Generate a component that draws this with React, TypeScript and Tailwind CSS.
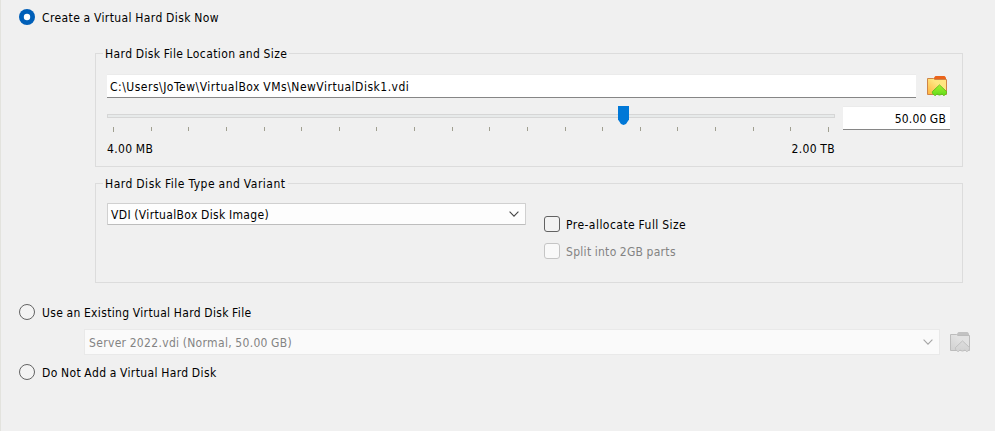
import { useId, type ReactNode } from 'react';

function Radio({ checked = false, label, tracking }: { checked?: boolean; label: string; tracking: string }) {
  return (
    <label className="flex h-4 items-center whitespace-nowrap">
      <svg width="16" height="16" viewBox="0 0 16 16" className="mr-[7px] shrink-0">
        {checked ? (
          <>
            <circle cx="8" cy="8" r="8" fill="#005fb8" />
            <circle cx="8" cy="8" r="3.2" fill="#fff" />
          </>
        ) : (
          <circle cx="8" cy="8" r="7.5" fill="#f3f3f3" stroke="#636363" />
        )}
      </svg>
      <span className={'pt-[2px] ' + tracking}>{label}</span>
    </label>
  );
}

function Check({ disabled = false, label, tracking }: { disabled?: boolean; label: string; tracking: string }) {
  return (
    <label className={'flex h-4 items-center whitespace-nowrap ' + (disabled ? 'text-[#838383]' : '')}>
      <span
        className={
          'mr-[6px] size-4 shrink-0 rounded-[3px] border ' +
          (disabled ? 'border-[#c5c5c5] bg-[#f9f9f9]' : 'border-[#626262] bg-[#f3f3f3]')
        }
      />
      <span className={'pt-[2px] ' + tracking}>{label}</span>
    </label>
  );
}

function Chevron({ color }: { color: string }) {
  return (
    <svg width="10" height="6" viewBox="0 0 10 6" fill="none" stroke={color} strokeWidth="1.1">
      <path d="M.6.7 5 5.1 9.4.7" />
    </svg>
  );
}

function FolderIcon({ disabled = false }: { disabled?: boolean }) {
  const id = useId();
  const c = disabled
    ? { tab: '#c2c2c2', top: '#e2e2e2', bottom: '#d0d0d0', edge: '#bcbcbc', arrow: '#dcdcdc', arrowLow: '#d2d2d2', line: '#bdbdbd' }
    : { tab: '#ea641b', top: '#ffe680', bottom: '#ffb13d', edge: '#cf8447', arrow: '#a4f02c', arrowLow: '#62dc1c', line: '#5cc01c' };
  return (
    <svg width="20" height="20" viewBox="0 0 20 20" className="shrink-0">
      <defs>
        <linearGradient id={id + 'f'} x1="1" y1="0" x2="0" y2="1">
          <stop stopColor={c.top} />
          <stop offset=".4" stopColor={c.top} />
          <stop offset="1" stopColor={c.bottom} />
        </linearGradient>
        <linearGradient id={id + 'a'} x1="0" y1="0" x2="0" y2="1">
          <stop stopColor={c.arrow} />
          <stop offset="1" stopColor={c.arrowLow} />
        </linearGradient>
      </defs>
      <path d="M7 3V1.6L8.5 0h9L19 1.4V4H7z" fill={c.tab} />
      <path d="M.5 2.5h6.2l1 1h11.8v15H.5z" fill={`url(#${id}f)`} stroke={c.edge} />
      <path
        d="M12.5 8.9 19.6 15.6v1.6l-2.3 2.3h-.8l-1.2-1.2h-1.3l-.8.7h-1.4l-.8-.7H9.7l-1.2 1.2h-.8l-2.3-2.3v-1.6z"
        fill={`url(#${id}a)`}
        stroke={c.line}
        strokeWidth=".9"
        strokeLinejoin="round"
      />
    </svg>
  );
}

function Group({ title, className, tracking, children }: { title: string; className: string; tracking: string; children: ReactNode }) {
  return (
    <fieldset className={'ml-[95px] w-[868px] border border-[#dcdcdc] ' + className}>
      <legend className="ml-[7px] h-[15px] pr-[2px] pl-[2px] leading-[17px] whitespace-nowrap">
        <span className={tracking}>{title}</span>
      </legend>
      {children}
    </fieldset>
  );
}

const ticks = Array.from({ length: 20 }, (_, i) => i);

export default function App() {
  return (
    <main className="flex h-[431px] w-[995px] flex-col overflow-hidden bg-[#f0f0f0] pt-[9px] font-['DejaVu_Sans_Condensed','DejaVu_Sans',sans-serif] text-[12px] leading-4 text-black [font-stretch:condensed] [word-spacing:-0.5px] shadow-[inset_1px_0_0_#e3e3de]">
      <div className="pl-[19px]">
        <Radio checked label="Create a Virtual Hard Disk Now" tracking="tracking-[0.4px]" />
      </div>

      <Group title="Hard Disk File Location and Size" className="mt-[21px] h-[121px]" tracking="tracking-[0.39px]">
        <div className="mt-[13px] ml-[11px] flex items-center">
          <div className="flex h-6 w-[809px] items-center border-t border-b border-t-[#ebebeb] border-b-[#868686] bg-white pl-[3px] whitespace-nowrap">
            <span className="pt-[2px] tracking-[0.5px]">C:\Users\JoTew\VirtualBox VMs\NewVirtualDisk1.vdi</span>
          </div>
          <div className="ml-[11px]">
            <FolderIcon />
          </div>
        </div>
        <div className="mt-2 ml-[11px] flex">
          <div className="w-[728px]">
            <div className="flex h-[21px] items-start pt-2">
              <div className="relative h-1 w-full border border-[#d6d6d6] bg-[#e7eaea]">
                <svg width="11" height="19" viewBox="0 0 11 19" className="absolute top-[-9px] left-[510px]">
                  <path d="M0 0h11v13.5L8 18l-2.5 1L3 18l-3-4.5z" fill="#0078d7" />
                </svg>
              </div>
            </div>
            <div className="ml-[6px] flex w-[716px] items-start justify-between">
              {ticks.map((i) => (
                <span key={i} className={'w-px bg-[#a09f90] ' + (i === 0 || i === 19 ? 'h-[5px]' : 'h-1')} />
              ))}
            </div>
            <div className="mt-[9px] flex justify-between">
              <span className="tracking-[0.36px]">4.00 MB</span>
              <span className="tracking-[0.36px]">2.00 TB</span>
            </div>
          </div>
          <div className="ml-2 flex h-6 w-[107px] items-center justify-end border-t border-b border-t-[#ebebeb] border-b-[#868686] bg-white pr-1">
            <span className="pt-[2px] tracking-[0.21px]">50.00 GB</span>
          </div>
        </div>
      </Group>

      <Group title="Hard Disk File Type and Variant" className="mt-[9px] h-[107px]" tracking="tracking-[0.51px]">
        <div className="mt-3 ml-[11px] flex items-start">
          <div className="flex h-[22px] w-[419px] items-center justify-between rounded-[1px] border border-[#d0d0d0] border-b-[#bdbdbd] bg-[#fdfdfd] pr-[6px] pl-[3px] whitespace-nowrap">
            <span className="pt-[2px] tracking-[0.36px]">VDI (VirtualBox Disk Image)</span>
            <Chevron color="#454545" />
          </div>
          <div className="mt-[13px] ml-[18px] flex flex-col gap-[11px]">
            <Check label="Pre-allocate Full Size" tracking="tracking-[0.46px]" />
            <Check disabled label="Split into 2GB parts" tracking="tracking-[0.3px]" />
          </div>
        </div>
      </Group>

      <div className="mt-[21px] pl-[19px]">
        <Radio label="Use an Existing Virtual Hard Disk File" tracking="tracking-[0.35px]" />
      </div>
      <div className="mt-[9px] ml-[84px] flex items-center">
        <div className="flex h-[26px] w-[856px] items-center justify-between border border-[#e9e9e9] bg-[#fafafa] pr-[6px] pl-[4px] whitespace-nowrap text-[#838383]">
          <span className="pt-[2px] tracking-[0.33px]">Server 2022.vdi (Normal, 50.00 GB)</span>
          <Chevron color="#a5a5a5" />
        </div>
        <div className="ml-[10px]">
          <FolderIcon disabled />
        </div>
      </div>
      <div className="mt-[9px] pl-[19px]">
        <Radio label="Do Not Add a Virtual Hard Disk" tracking="tracking-[0.38px]" />
      </div>
    </main>
  );
}
